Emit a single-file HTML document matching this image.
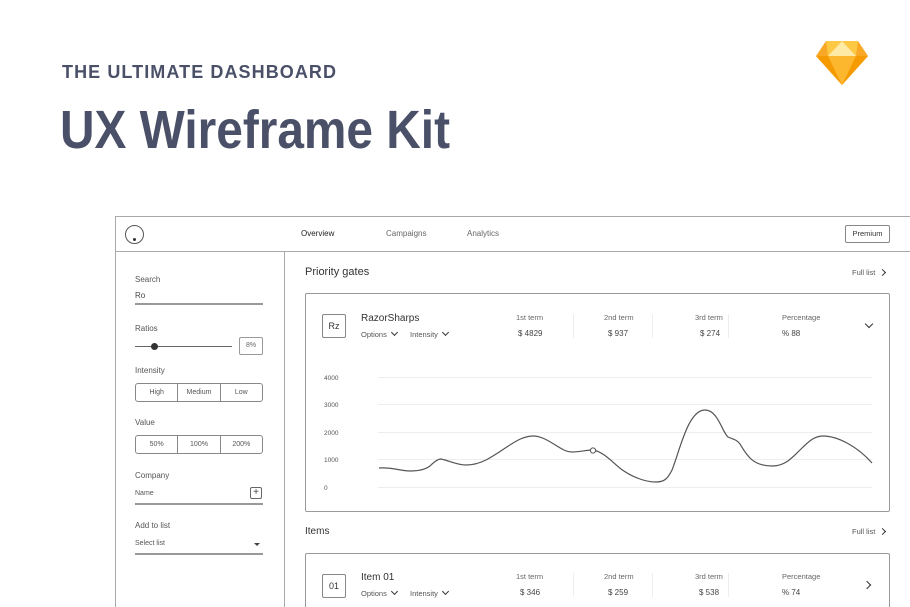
<!DOCTYPE html>
<html><head><meta charset="utf-8"><style>
*{margin:0;padding:0;box-sizing:border-box}
html,body{width:910px;height:607px;overflow:hidden}
body{background:#fff;font-family:"Liberation Sans",sans-serif;color:#333;position:relative}
.a{position:absolute;white-space:nowrap}
.s{font-size:8px;color:#444}
.l{font-size:8px;color:#555}
.box{position:absolute;border:1px solid #999;border-radius:2px}
.seg{position:absolute;display:flex;border:1px solid #888;border-radius:3px;height:19px}
.seg div{flex:1;text-align:center;font-size:7px;line-height:17px;color:#555;border-right:1px solid #888}
.seg div:last-child{border-right:none}
.line{position:absolute;height:2px;background:#999}
.chev{display:inline-block;width:5px;height:5px;border-right:1.3px solid #333;border-bottom:1.3px solid #333;transform:rotate(45deg);margin-left:5px;position:relative;top:-2px}
.vsep{position:absolute;width:1px;background:#eee;height:24px}
</style></head><body>

<svg class="a" style="left:0;top:0" width="910" height="170">
<text x="62" y="78" font-family="Liberation Sans" font-weight="bold" font-size="18" fill="#4a5068" textLength="276" lengthAdjust="spacing" letter-spacing="2">THE ULTIMATE DASHBOARD</text>
<text x="60" y="148" font-family="Liberation Sans" font-weight="bold" font-size="54" fill="#4a5068" textLength="390" lengthAdjust="spacingAndGlyphs">UX Wireframe Kit</text>
<g transform="translate(816,41)">
<polygon points="10,0 42,0 52,15 26,44 0,15" fill="#f9a825"/>
<polygon points="0,15 52,15 26,44" fill="#f59b00"/>
<polygon points="12,15 40,15 26,44" fill="#fcb72e"/>
<polygon points="10,0 26,0 12,15" fill="#fdc843"/>
<polygon points="42,0 26,0 40,15" fill="#fdc843"/>
<polygon points="26,0 12,15 40,15" fill="#feeaa5"/>
</g>
</svg>

<!-- frame -->
<div class="a" style="left:115px;top:216px;width:800px;height:420px;border-top:1px solid #aaa;border-left:1px solid #aaa"></div>
<div class="a" style="left:115px;top:251px;width:800px;height:1px;background:#aaa"></div>
<div class="a" style="left:284px;top:251px;width:1px;height:360px;background:#aaa"></div>
<div class="a" style="left:125px;top:225px;width:19px;height:19px;border:1px solid #555;border-radius:50%"></div>
<div class="a" style="left:133px;top:238px;width:3px;height:3px;background:#333;border-radius:50%"></div>
<div class="a" style="left:301px;top:229px;font-size:8px;color:#222">Overview</div>
<div class="a" style="left:386px;top:229px;font-size:8px;color:#666">Campaigns</div>
<div class="a" style="left:467px;top:229px;font-size:8px;color:#666">Analytics</div>
<div class="box" style="left:845px;top:225px;width:45px;height:18px;border-color:#888;font-size:7.5px;text-align:center;line-height:16px;color:#333">Premium</div>

<!-- sidebar -->
<div class="a l" style="left:135px;top:275px">Search</div>
<div class="a l" style="left:135px;top:291px;color:#444">Ro</div>
<div class="line" style="left:135px;top:303px;width:128px"></div>
<div class="a l" style="left:135px;top:324px">Ratios</div>
<div class="a" style="left:135px;top:346px;width:97px;height:1px;background:#666"></div>
<div class="a" style="left:151px;top:343px;width:7px;height:7px;background:#333;border-radius:50%"></div>
<div class="box" style="left:239px;top:337px;width:24px;height:18px;font-size:7px;text-align:center;line-height:16px;color:#666">8%</div>
<div class="a l" style="left:135px;top:366px">Intensity</div>
<div class="seg" style="left:135px;top:383px;width:128px"><div>High</div><div>Medium</div><div>Low</div></div>
<div class="a l" style="left:135px;top:418px">Value</div>
<div class="seg" style="left:135px;top:435px;width:128px"><div>50%</div><div>100%</div><div>200%</div></div>
<div class="a l" style="left:135px;top:471px">Company</div>
<div class="a" style="left:135px;top:490px;font-size:7px;color:#555">Name</div>
<div class="box" style="left:250px;top:487px;width:12px;height:12px;border-color:#666;font-size:10px;line-height:10px;text-align:center;color:#444">+</div>
<div class="line" style="left:135px;top:503px;width:128px"></div>
<div class="a l" style="left:135px;top:521px">Add to list</div>
<div class="a" style="left:135px;top:540px;font-size:7px;color:#555">Select list</div>
<div class="a" style="left:254px;top:543px;width:0;height:0;border-left:3px solid transparent;border-right:3px solid transparent;border-top:3px solid #444"></div>
<div class="line" style="left:135px;top:553px;width:128px"></div>

<!-- main -->
<div class="a" style="left:305px;top:266px;font-size:11px;color:#333">Priority gates</div>
<div class="a" style="left:852px;top:268px;font-size:7.5px;color:#555">Full list <span style="display:inline-block;width:5px;height:5px;border-right:1.3px solid #333;border-top:1.3px solid #333;transform:rotate(45deg);margin-left:3px"></span></div>
<div class="box" style="left:305px;top:293px;width:585px;height:219px;border-color:#999"></div>
<div class="box" style="left:322px;top:314px;width:24px;height:24px;border-color:#888;font-size:9px;text-align:center;line-height:22px;color:#333">Rz</div>
<div class="a" style="left:361px;top:313px;font-size:10px;color:#333">RazorSharps</div>
<div class="a" style="left:361px;top:330px;font-size:7.5px;color:#555">Options<span class="chev"></span></div>
<div class="a" style="left:410px;top:330px;font-size:7.5px;color:#555">Intensity<span class="chev"></span></div>
<div class="a s" style="left:516px;top:313px;color:#666;font-size:7.5px">1st term</div><div class="a s" style="left:518px;top:329px">$ 4829</div>
<div class="vsep" style="left:573px;top:314px"></div>
<div class="a s" style="left:604px;top:313px;color:#666;font-size:7.5px">2nd term</div><div class="a s" style="left:608px;top:329px">$ 937</div>
<div class="vsep" style="left:652px;top:314px"></div>
<div class="a s" style="left:695px;top:313px;color:#666;font-size:7.5px">3rd term</div><div class="a s" style="left:700px;top:329px">$ 274</div>
<div class="vsep" style="left:728px;top:314px"></div>
<div class="a s" style="left:782px;top:313px;color:#666;font-size:7.5px">Percentage</div><div class="a s" style="left:782px;top:329px">% 88</div>
<div class="a" style="left:866px;top:321px;width:6px;height:6px;border-right:1.5px solid #333;border-bottom:1.5px solid #333;transform:rotate(45deg)"></div>

<svg class="a" style="left:0;top:0" width="910" height="607">
<g stroke="#eee" stroke-width="1">
<line x1="378" y1="377.5" x2="872" y2="377.5"/><line x1="378" y1="404.5" x2="872" y2="404.5"/><line x1="378" y1="432.5" x2="872" y2="432.5"/><line x1="378" y1="459.5" x2="872" y2="459.5"/><line x1="378" y1="487.5" x2="872" y2="487.5"/>
</g>
<g font-family="Liberation Sans" font-size="6.5" fill="#555">
<text x="324" y="380">4000</text><text x="324" y="407">3000</text><text x="324" y="435">2000</text><text x="324" y="462">1000</text><text x="324" y="490">0</text>
</g>
<path fill="none" stroke="#555" stroke-width="1.2" d="M379,468 C392,467 400,471 410,471 C420,471 426,469 430,466 C435,461 438,459 441,459 C450,461 457,465 466,465 C474,465 480,463 486,460 C505,450 518,436 533,436 C548,436 560,452 572,452 C580,452 586,450 593,450 C604,452 612,462 621,469 C632,477 645,482 656,482 C665,482 668,478 672,470 C680,450 688,410 705,410 C718,410 722,432 728,437 C735,440 737,440 740,444 C746,454 752,466 772,466 C785,466 792,458 800,450 C808,442 814,436 823,436 C838,436 858,447 872,463"/>
<circle cx="593" cy="450.5" r="2.6" fill="#fff" stroke="#555" stroke-width="1"/>
</svg>

<div class="a" style="left:305px;top:526px;font-size:10px;color:#333">Items</div>
<div class="a" style="left:852px;top:527px;font-size:7.5px;color:#555">Full list <span style="display:inline-block;width:5px;height:5px;border-right:1.3px solid #333;border-top:1.3px solid #333;transform:rotate(45deg);margin-left:3px"></span></div>
<div class="a" style="left:305px;top:553px;width:585px;height:80px;border:1px solid #999;border-bottom:none;border-radius:2px 2px 0 0"></div>
<div class="box" style="left:322px;top:574px;width:24px;height:24px;border-color:#888;font-size:9px;text-align:center;line-height:22px;color:#333">01</div>
<div class="a" style="left:361px;top:572px;font-size:10px;color:#333">Item 01</div>
<div class="a" style="left:361px;top:589px;font-size:7.5px;color:#555">Options<span class="chev"></span></div>
<div class="a" style="left:410px;top:589px;font-size:7.5px;color:#555">Intensity<span class="chev"></span></div>
<div class="a s" style="left:516px;top:572px;color:#666;font-size:7.5px">1st term</div><div class="a s" style="left:520px;top:588px">$ 346</div>
<div class="vsep" style="left:573px;top:573px"></div>
<div class="a s" style="left:604px;top:572px;color:#666;font-size:7.5px">2nd term</div><div class="a s" style="left:608px;top:588px">$ 259</div>
<div class="vsep" style="left:652px;top:573px"></div>
<div class="a s" style="left:695px;top:572px;color:#666;font-size:7.5px">3rd term</div><div class="a s" style="left:699px;top:588px">$ 538</div>
<div class="vsep" style="left:728px;top:573px"></div>
<div class="a s" style="left:782px;top:572px;color:#666;font-size:7.5px">Percentage</div><div class="a s" style="left:782px;top:588px">% 74</div>
<div class="a" style="left:864px;top:582px;width:6px;height:6px;border-right:1.5px solid #333;border-top:1.5px solid #333;transform:rotate(45deg)"></div>
</body></html>
